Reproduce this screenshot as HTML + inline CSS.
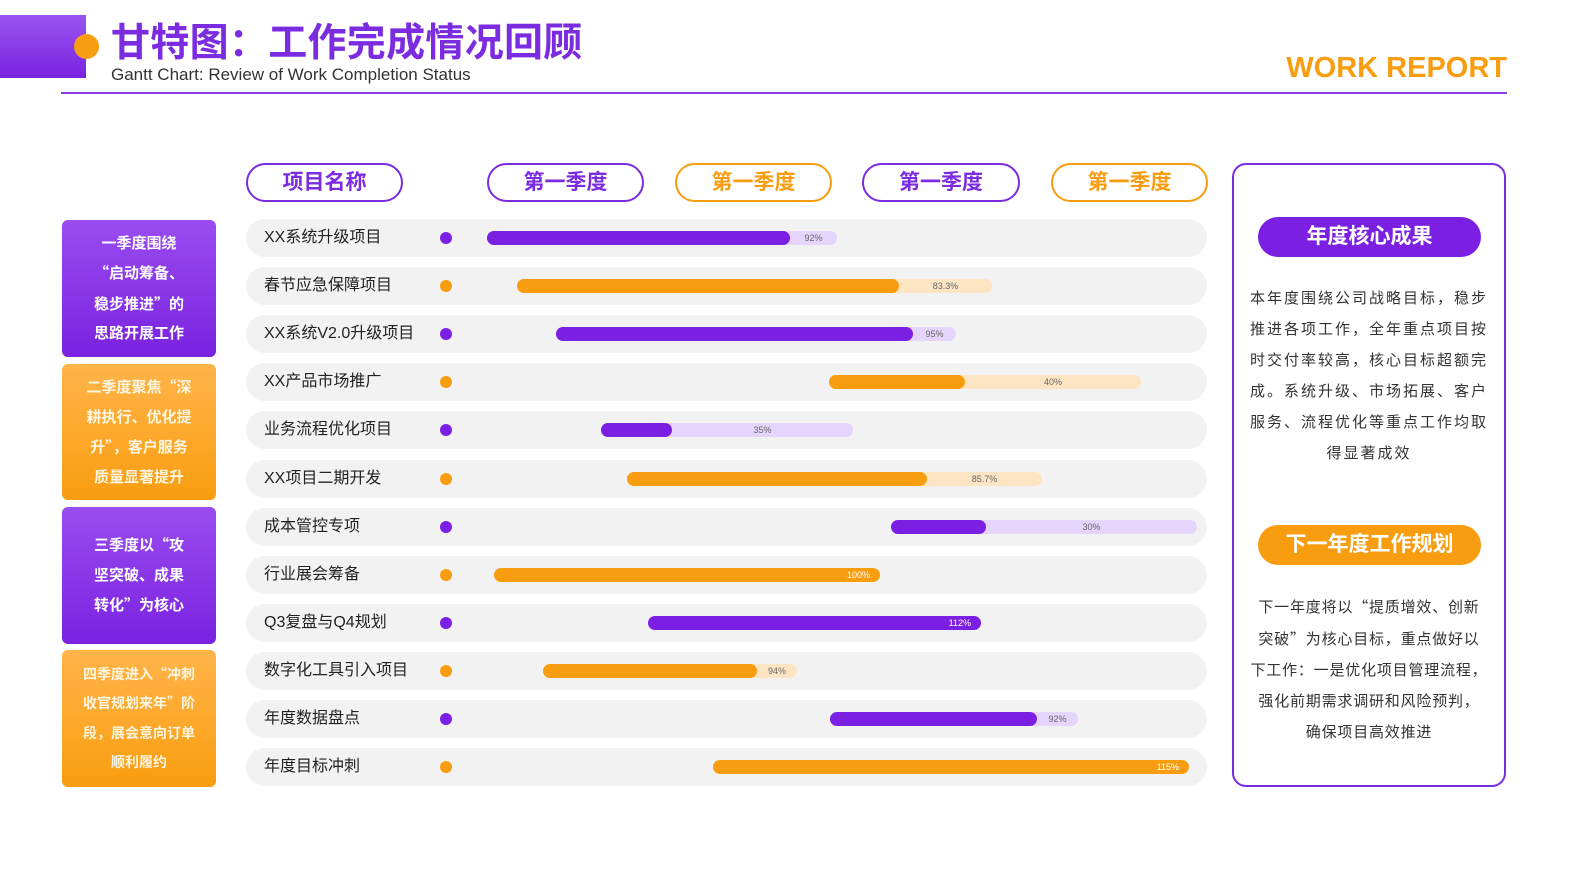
<!DOCTYPE html><html><head><meta charset="utf-8"><style>
*{margin:0;padding:0;box-sizing:border-box}
body{width:1569px;height:882px;background:#fff;position:relative;overflow:hidden;font-family:"Liberation Sans","Noto Sans CJK SC",sans-serif}
.a{position:absolute}
.q{font-family:"Noto Sans CJK SC",sans-serif}
.pill{position:absolute;top:163px;height:39px;border:2px solid #7b2be0;border-radius:20px;text-align:center;line-height:35px;font-size:21px;font-weight:bold;color:#7b2be0}
.pill.o{border-color:#f99d10;color:#f99d10}
.row{position:absolute;left:246px;width:961px;height:38px;border-radius:19px;background:#f2f2f2}
.nm{position:absolute;left:18px;top:0;line-height:38px;font-size:16px;color:#222}
.dot{position:absolute;left:194px;top:13px;width:12px;height:12px;border-radius:50%}
.bg,.fg{position:absolute;top:12px;height:14px;border-radius:7px}
.lb{position:absolute;top:12px;line-height:14px;font-size:9px;color:#666}
.lbox{position:absolute;left:62px;width:154px;border-radius:6px;color:#fff;font-size:15px;font-weight:bold;text-align:center;line-height:29.5px;display:flex;align-items:center;justify-content:center;white-space:nowrap}
.P{background:linear-gradient(#9a4cf0,#7a22e0)}
.O{background:linear-gradient(#ffb44a,#f99d10);color:#fff6e0}
.rt{position:absolute;font-size:15px;line-height:31px;color:#333;text-align:center;white-space:nowrap}
</style></head><body>
<div class="a" style="left:0;top:15px;width:86px;height:63px;background:linear-gradient(#9a55f0,#7a22e0)"></div>
<div class="a" style="left:74px;top:34px;width:25px;height:25px;border-radius:50%;background:#f99d10"></div>
<div class="a" style="left:111px;top:12px;font-size:39px;font-weight:bold;color:#7b2be0;letter-spacing:0.3px">甘特图：工作完成情况回顾</div>
<div class="a" style="left:111px;top:65px;font-size:17px;color:#333">Gantt Chart: Review of Work Completion Status</div>
<div class="a" style="right:62px;top:52px;font-size:29px;font-weight:bold;color:#f99d10">WORK REPORT</div>
<div class="a" style="left:61px;top:92px;width:1446px;height:2px;background:#8a3ee6"></div>

<div class="pill" style="left:246px;width:157px">项目名称</div>
<div class="pill" style="left:487px;width:157px">第一季度</div>
<div class="pill o" style="left:675px;width:157px">第一季度</div>
<div class="pill" style="left:862px;width:158px">第一季度</div>
<div class="pill o" style="left:1051px;width:157px">第一季度</div>

<div class="lbox P" style="top:220px;height:137px"><div>一季度围绕<br><span class="q">“</span>启动筹备、<br>稳步推进<span class="q">”</span>的<br>思路开展工作</div></div>
<div class="lbox O" style="top:364px;height:136px"><div>二季度聚焦<span class="q">“</span>深<br>耕执行、优化提<br>升<span class="q">”</span>，客户服务<br>质量显著提升</div></div>
<div class="lbox P" style="top:507px;height:137px"><div>三季度以<span class="q">“</span>攻<br>坚突破、成果<br>转化<span class="q">”</span>为核心</div></div>
<div class="lbox O" style="top:650px;height:137px;font-size:14px"><div>四季度进入<span class="q">“</span>冲刺<br>收官规划来年<span class="q">”</span>阶<br>段，展会意向订单<br>顺利履约</div></div>

<div id="rows"></div>
<script>
var d=[["XX系统升级项目","p",487,790,837,"92%"],["春节应急保障项目","o",517,899,992,"83.3%"],["XX系统V2.0升级项目","p",556,913,956,"95%"],["XX产品市场推广","o",829,965,1141,"40%"],["业务流程优化项目","p",601,672,853,"35%"],["XX项目二期开发","o",627,927,1042,"85.7%"],["成本管控专项","p",891,986,1197,"30%"],["行业展会筹备","o",494,880,0,"100%"],["Q3复盘与Q4规划","p",648,981,0,"112%"],["数字化工具引入项目","o",543,757,797,"94%"],["年度数据盘点","p",830,1037,1078,"92%"],["年度目标冲刺","o",713,1189,0,"115%"]];
var h="";d.forEach(function(r,i){var t=219+i*48.1;var c=r[1]=="p"?"#7b1fe3":"#f99d10",l=r[1]=="p"?"#e5d4fb":"#fde5c4";
h+='<div class="row" style="top:'+t+'px"><div class="nm">'+r[0]+'</div><div class="dot" style="background:'+c+'"></div>';
if(r[4])h+='<div class="bg" style="left:'+(r[2]-246)+'px;width:'+(r[4]-r[2])+'px;background:'+l+'"></div>';
h+='<div class="fg" style="left:'+(r[2]-246)+'px;width:'+(r[3]-r[2])+'px;background:'+c+'"></div>';
if(r[4])h+='<div class="lb" style="left:'+(r[3]-246)+'px;width:'+(r[4]-r[3])+'px;text-align:center">'+r[5]+'</div>';
else h+='<div class="lb" style="left:'+(r[3]-246-50)+'px;width:40px;text-align:right;color:#fff">'+r[5]+'</div>';
h+='</div>';});document.getElementById("rows").innerHTML=h;
</script>

<div class="a" style="left:1232px;top:163px;width:274px;height:624px;border:2px solid #7b2be0;border-radius:14px"></div>
<div class="a" style="left:1258px;top:217px;width:223px;height:40px;border-radius:20px;background:#7b1fe3;color:#fff;font-size:21px;font-weight:bold;text-align:center;line-height:40px">年度核心成果</div>
<div class="rt" style="left:1234px;top:283px;width:270px;letter-spacing:2px">本年度围绕公司战略目标，稳步<br>推进各项工作，全年重点项目按<br>时交付率较高，核心目标超额完<br>成。系统升级、市场拓展、客户<br>服务、流程优化等重点工作均取<br>得显著成效</div>
<div class="a" style="left:1258px;top:525px;width:223px;height:40px;border-radius:20px;background:#f99d10;color:#fff;font-size:21px;font-weight:bold;text-align:center;line-height:40px">下一年度工作规划</div>
<div class="rt" style="left:1234px;top:591px;width:270px;letter-spacing:0.8px">下一年度将以<span class="q">“</span>提质增效、创新<br>突破<span class="q">”</span>为核心目标，重点做好以<br>下工作：一是优化项目管理流程，<br>强化前期需求调研和风险预判，<br>确保项目高效推进</div>
</body></html>
